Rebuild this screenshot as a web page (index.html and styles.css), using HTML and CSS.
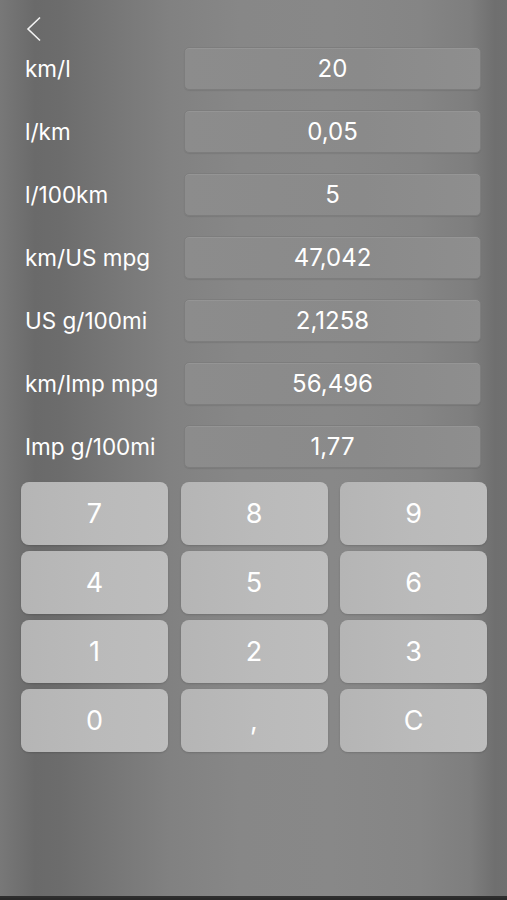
FILE: index.html
```html
<!DOCTYPE html>
<html lang="en">
<head>
<meta charset="UTF-8" />
<title>Fuel consumption converter</title>
<link rel="stylesheet" href="styles.css">
</head>
<body>
  <div class="screen">
    <div class="topbar">
      <svg class="back" width="18" height="26" viewBox="0 0 18 26">
        <path d="M15 1.5 L3 13 L15 24.5" fill="none" stroke="#f2f2f2" stroke-width="1.6" />
      </svg>
    </div>

    <div class="rows">
      <div class="row"><span class="label">km/l</span><div class="field">20</div></div>
      <div class="row"><span class="label">l/km</span><div class="field">0,05</div></div>
      <div class="row"><span class="label">l/100km</span><div class="field">5</div></div>
      <div class="row"><span class="label">km/US mpg</span><div class="field">47,042</div></div>
      <div class="row"><span class="label">US g/100mi</span><div class="field">2,1258</div></div>
      <div class="row"><span class="label">km/Imp mpg</span><div class="field">56,496</div></div>
      <div class="row"><span class="label">Imp g/100mi</span><div class="field">1,77</div></div>
    </div>

    <div class="keypad">
      <button class="key">7</button>
      <button class="key">8</button>
      <button class="key">9</button>
      <button class="key">4</button>
      <button class="key">5</button>
      <button class="key">6</button>
      <button class="key">1</button>
      <button class="key">2</button>
      <button class="key">3</button>
      <button class="key">0</button>
      <button class="key">,</button>
      <button class="key">C</button>
    </div>
  </div>
</body>
</html>
```

FILE: styles.css
```css
html, body { margin: 0; height: 100%; }
body {
  font-family: Inter, "Liberation Sans", Arial, sans-serif;
  color: #fff;
  background: #2a2a2a;
}
.screen {
  height: 898px;
  box-sizing: border-box;
  padding: 0 20px 0 21px;
  background: linear-gradient(to right,
    #787878 0px, #6a6a6a 35px, #6c6c6c 60px, #767676 110px, #818181 170px,
    #878787 240px, #888888 330px, #858585 420px, #7e7e7e 470px, #6f6f6f 495px, #707070 507px);
  border-bottom: 2px solid #2e2e2e;
}
.topbar { height: 47px; padding-left: 4px; display: flex; align-items: flex-start; }
.back { margin-top: 16px; }

.rows { display: flex; flex-direction: column; gap: 20px; }
.row { display: flex; align-items: center; height: 43px; }
.label { width: 159px; padding-left: 4px; font-size: 22.5px; white-space: nowrap; }
.field {
  flex: 1;
  height: 41px;
  margin-right: 6px;
  border: 1px solid #7d7d7d;
  border-radius: 5px;
  background: linear-gradient(to right, #8c8c8c, #8a8a8a 60%, #8e8e8e);
  box-shadow: inset 0 1px 0 rgba(255,255,255,.08), 0 1px 1px rgba(0,0,0,.08);
  display: flex; align-items: center; justify-content: center;
  font-size: 24px;
}

.keypad {
  margin-top: 14px;
  display: grid;
  grid-template-columns: repeat(3, 1fr);
  grid-auto-rows: 63px;
  column-gap: 12.5px;
  row-gap: 6px;
}
.key {
  border: none;
  border-radius: 8px;
  background: linear-gradient(to right, #b5b5b5, #bababa 50%, #bdbdbd);
  box-shadow: 0 1px 2px rgba(0,0,0,.15);
  color: #fff;
  font-family: inherit;
  font-size: 27px;
  padding: 0;
}
```
